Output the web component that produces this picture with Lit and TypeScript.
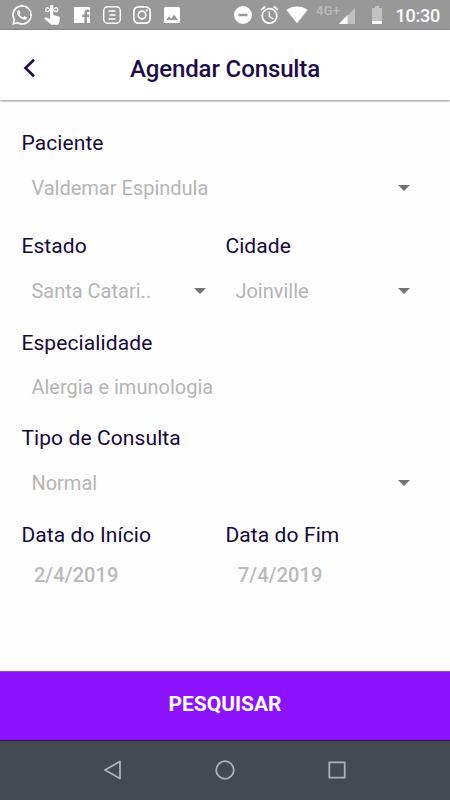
import { LitElement, html, css, svg, nothing } from "lit";
import { customElement, property } from "lit/decorators.js";

@customElement("status-bar")
class StatusBar extends LitElement {
  static styles = css`
    :host { display: flex; box-sizing: border-box; height: 30px; background: #989898; border-bottom: 1px solid #8d8a8d; color: #fff; align-items: center; padding: 0 11px 0 12px; }
    svg { display: block; flex: none; height: 20px; fill: currentColor; }
    .line { fill: none; stroke: currentColor; }
    .wa { width: 20px; }
    .touch { width: 18px; margin-left: 11px; }
    .fb { width: 18px; margin-left: 12px; }
    .news { width: 20px; margin-left: 11px; }
    .insta { width: 20px; margin-left: 10px; }
    .pic { width: 18px; margin-left: 11px; }
    .dnd { width: 18px; margin-left: auto; }
    .alarm { width: 19px; margin-left: 8px; }
    .wifi { width: 22px; margin-left: 7px; }
    .net { font-size: 13px; line-height: 14px; letter-spacing: .25px; color: #bdbdbd; align-self: flex-start; margin: 4px 0 0 8px; width: 23px; white-space: nowrap; font-weight: 500; }
    .cell { width: 16px; }
    .bat { width: 10px; margin-left: 17px; }
    .time { margin-left: 13.500px; width: 43.500px; font-size: 18px; line-height: 20px; font-weight: 500; white-space: nowrap; letter-spacing: -.25px; padding-top: 2px; }
    .dim { opacity: .4; }
  `;
  render() {
    return html`
      <svg class="wa" viewBox="0 0 24 24"><path d="M17.472 14.382c-.297-.149-1.758-.867-2.03-.967-.273-.099-.471-.148-.67.15-.197.297-.767.966-.94 1.164-.173.199-.347.223-.644.075-.297-.15-1.255-.463-2.39-1.475-.883-.788-1.48-1.761-1.653-2.059-.173-.297-.018-.458.13-.606.134-.133.298-.347.446-.52.149-.174.198-.298.298-.497.099-.198.05-.371-.025-.52-.075-.149-.669-1.612-.916-2.207-.242-.579-.487-.5-.669-.51-.173-.008-.371-.01-.57-.01-.198 0-.52.074-.792.372-.272.297-1.04 1.016-1.04 2.479 0 1.462 1.065 2.875 1.213 3.074.149.198 2.096 3.2 5.077 4.487.709.306 1.262.489 1.694.625.712.227 1.36.195 1.871.118.571-.085 1.758-.719 2.006-1.413.248-.694.248-1.289.173-1.413-.074-.124-.272-.198-.57-.347m-5.421 7.403h-.004a9.87 9.87 0 01-5.031-1.378l-.361-.214-3.741.982.998-3.648-.235-.374a9.86 9.86 0 01-1.51-5.26c.001-5.45 4.436-9.884 9.888-9.884 2.64 0 5.122 1.03 6.988 2.898a9.825 9.825 0 012.893 6.994c-.003 5.45-4.437 9.884-9.885 9.884m8.413-18.297A11.815 11.815 0 0012.05 0C5.495 0 .16 5.335.157 11.892c0 2.096.547 4.142 1.588 5.945L.057 24l6.305-1.654a11.882 11.882 0 005.683 1.448h.005c6.554 0 11.89-5.335 11.893-11.893a11.821 11.821 0 00-3.48-8.413z"/></svg>
      <svg class="touch" viewBox="0 0 18 20"><path d="M7.1 1.500a1.600 1.600 0 0 1 3.200 0V10l5.500 1.600q1.300.5 1.100 1.800l-.9 4.800q-.3 1.600-1.600 1.600H9.100q-.8 0-1.400-.6L1.200 13.400q1-1.400 2.400-.9l3.500 1.500z"/><path class="line" stroke-width="1.300" d="M7.500 4.700L4.800 2.800Q2.700 2.500 2.700 4.700t2.100 1.900zM9.900 4.700l2.700-1.900q2.100-.3 2.100 1.900t-2.100 1.900z"/></svg>
      <svg class="fb" viewBox="0 0 18 20"><path d="M1 2h16v16h-3v-6h2l.4-2.500H14V8q0-1.100 1.100-1.100h1.300V4.600h-2q-3 0-3 3v1.900H9.300V12h2.100v6H1z"/></svg>
      <svg class="news" viewBox="0 0 20 20"><rect class="line" x="1.700" y="1.700" width="16.600" height="16.600" rx="4" stroke-width="1.400"/><path class="line" stroke-width="1.500" d="M6.500 6h7M7.500 10h6M6.500 14h7"/></svg>
      <svg class="insta" viewBox="0 0 20 20"><rect class="line" x="1.900" y="1.900" width="16.200" height="16.200" rx="4.500" stroke-width="1.700"/><circle class="line" cx="10" cy="10" r="3.800" stroke-width="1.700"/><circle cx="14.700" cy="5.300" r="1.150"/></svg>
      <svg class="pic" viewBox="0 0 18 20"><path fill-rule="evenodd" d="M2.500 2h13Q17 2 17 3.500v13q0 1.500-1.500 1.500h-13Q1 18 1 16.500v-13Q1 2 2.500 2zM3 15h12l-3.800-5.200-3 3.900-2.200-2.500z"/></svg>
      <svg class="dnd" viewBox="0 0 18 20"><path fill-rule="evenodd" d="M9 1a9 9 0 1 1 0 18A9 9 0 0 1 9 1zM4.500 8.800v2.400h9V8.800z"/></svg>
      <svg class="alarm" viewBox="1.500 1.500 21 21"><path d="M22 5.720l-4.600-3.860-1.290 1.530 4.600 3.860L22 5.720zM7.880 3.390L6.600 1.860 2 5.710l1.290 1.530 4.590-3.850zM12.500 8H11v6l4.750 2.850.75-1.230-4-2.370V8zM12 4c-4.970 0-9 4.030-9 9s4.020 9 9 9a9 9 0 0 0 0-18zm0 16c-3.870 0-7-3.130-7-7s3.130-7 7-7 7 3.130 7 7-3.130 7-7 7z"/></svg>
      <svg class="wifi" viewBox="0 0 22 20"><path d="M.4 4.900Q5 1.500 11 1.500t10.600 3.400L11 18.200z"/></svg>
      <span class="net">4G+</span>
      <svg class="cell" viewBox="0 0 16 20"><path class="dim" d="M16 3v16H0z"/><path d="M8.500 8.500v10.500H0L8.500 10z"/></svg>
      <svg class="bat" viewBox="0 0 10 20"><path class="dim" d="M3 1h4v2h3v13H0V3h3z"/><path d="M0 16h10v2.500q0 .5-.5.500h-9q-.5 0-.5-.5z"/></svg>
      <span class="time">10:30</span>`;
  }
}

@customElement("form-field")
class FormField extends LitElement {
  @property() label = "";
  @property() value = "";
  @property({ type: Boolean }) select = false;
  @property({ type: Boolean }) date = false;
  static styles = css`
    :host { display: block; flex: 1; min-width: 0; }
    .label { font-size: 21px; line-height: 26px; color: #14083a; letter-spacing: .1px; white-space: nowrap; }
    .box { display: flex; align-items: center; justify-content: space-between; margin-top: 19px; padding: 0 var(--arrow-inset, 22px) 0 10px; font-size: 20px; line-height: 26px; color: #b5b5b5; white-space: nowrap; letter-spacing: 0; }
    .text .box { margin-top: 18px; }
    .date .box { margin-top: 14px; padding-left: 12.500px; font-weight: 500; color: #bababa; letter-spacing: .1px; }
    .arrow { width: 12px; height: 6px; fill: #737373; }
  `;
  render() {
    const kind = this.date ? "date" : this.select ? "select" : "text";
    return html`<div class=${kind}>
      <div class="label">${this.label}</div>
      <div class="box"><span>${this.value}</span>${this.select
        ? html`<svg class="arrow" viewBox="0 0 12 6">${svg`<path d="M0 0h12L6 6z"/>`}</svg>` : nothing}</div>
    </div>`;
  }
}

@customElement("app-root")
class AppRoot extends LitElement {
  static styles = css`
    :host { display: flex; flex-direction: column; height: 800px; background: #fefefe; font-family: Roboto, sans-serif; overflow: hidden; }
    header { box-sizing: border-box; height: 70px; flex: none; display: grid; grid-template-columns: 60px 1fr 60px; align-items: center; background: #fff; box-shadow: 0 1px 2px rgba(0,0,0,.45); padding-top: 7px; }
    .back { width: 14px; height: 20px; margin-left: 22px; margin-top: -1px; fill: none; stroke: #22104e; stroke-width: 2.700; }
    h1 { margin: 0; text-align: center; font-size: 24px; line-height: 30px; font-weight: 500; color: #1e0c48; white-space: nowrap; letter-spacing: -.12px; }
    main { flex: 1; padding: 30px 18px 0 21.400px; display: flex; flex-direction: column; }
    .row { display: flex; flex: none; }
    .r1 { height: 103px; } .r2 { height: 97px; } .r3 { height: 95px; } .r4 { height: 97px; }
    .row form-field + form-field { flex: 1; }
    .row form-field:first-child:not(:last-child) { flex: 0 0 204px; --arrow-inset: 19px; }
    button { flex: none; box-sizing: border-box; height: 70px; margin: 0; padding: 0 0 5px; border: 0; border-top: 1px solid #8d48cc; border-bottom: 1px solid #2c1746; background: #8d12fd; color: #fff; font: 700 21px/26px Roboto, sans-serif; letter-spacing: -.05px; }
    nav { flex: none; box-sizing: border-box; height: 59px; display: flex; justify-content: space-between; align-items: center; padding: 0 102px 1px; background: #434a51; }
    nav svg { width: 22px; height: 22px; fill: none; stroke: #aeb2b5; stroke-width: 1.800; stroke-linejoin: round; }
  `;
  render() {
    return html`
      <status-bar></status-bar>
      <header><svg class="back" viewBox="0 0 14 20"><path d="M12 1.800L3.500 10l8.500 8.200"/></svg><h1>Agendar Consulta</h1></header>
      <main>
        <div class="row r1"><form-field select label="Paciente" value="Valdemar Espindula"></form-field></div>
        <div class="row r2"><form-field select label="Estado" value="Santa Catari.."></form-field><form-field select label="Cidade" value="Joinville"></form-field></div>
        <div class="row r3"><form-field label="Especialidade" value="Alergia e imunologia"></form-field></div>
        <div class="row r4"><form-field select label="Tipo de Consulta" value="Normal"></form-field></div>
        <div class="row"><form-field date label="Data do Início" value="2/4/2019"></form-field><form-field date label="Data do Fim" value="7/4/2019"></form-field></div>
      </main>
      <button>PESQUISAR</button>
      <nav>
        <svg viewBox="0 0 22 22"><path d="M18 2.500v17L3 11z"/></svg>
        <svg viewBox="0 0 22 22"><circle cx="11" cy="11" r="8.800"/></svg>
        <svg viewBox="0 0 22 22"><path d="M3.300 3.300h15.400v15.400H3.300z"/></svg>
      </nav>`;
  }
}
